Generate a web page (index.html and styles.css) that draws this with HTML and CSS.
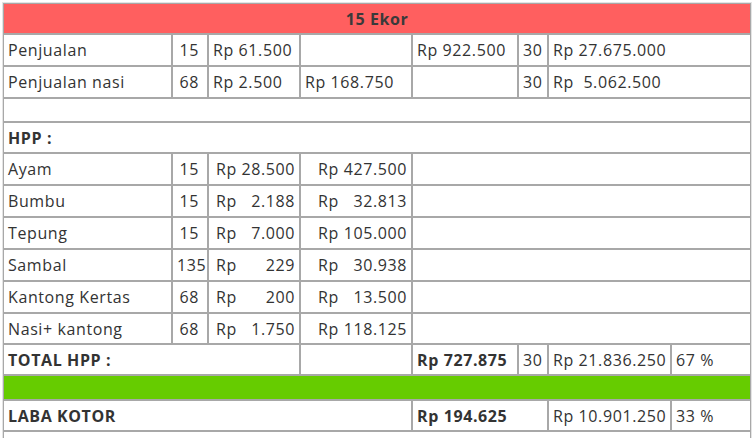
FILE: index.html
```html
<!DOCTYPE html>
<html>
<head>
<meta charset="utf-8">
<link rel="stylesheet" href="styles.css">
</head>
<body>
<table class="sheet">
  <colgroup>
    <col class="c1"><col class="c2"><col class="c3"><col class="c4"><col class="c5"><col class="c6"><col class="c7"><col class="c8">
  </colgroup>
  <tr class="head"><td colspan="8">15 Ekor</td></tr>
  <tr class="row">
    <td>Penjualan</td><td class="num">15</td><td>Rp 61.500</td><td></td><td>Rp 922.500</td><td class="num">30</td><td colspan="2">Rp 27.675.000</td>
  </tr>
  <tr class="row">
    <td>Penjualan nasi</td><td class="num">68</td><td>Rp 2.500</td><td>Rp 168.750</td><td></td><td class="num">30</td><td colspan="2">Rp&nbsp; 5.062.500</td>
  </tr>
  <tr class="blank"><td colspan="8"></td></tr>
  <tr class="row short"><td colspan="8" class="b">HPP :</td></tr>
  <tr class="row">
    <td>Ayam</td><td class="num">15</td>
    <td class="acc a3"><span>Rp</span><span>28.500</span></td>
    <td class="acc a4"><span>Rp</span><span>427.500</span></td>
    <td colspan="4"></td>
  </tr>
  <tr class="row">
    <td>Bumbu</td><td class="num">15</td>
    <td class="acc a3"><span>Rp</span><span>2.188</span></td>
    <td class="acc a4"><span>Rp</span><span>32.813</span></td>
    <td colspan="4"></td>
  </tr>
  <tr class="row">
    <td>Tepung</td><td class="num">15</td>
    <td class="acc a3"><span>Rp</span><span>7.000</span></td>
    <td class="acc a4"><span>Rp</span><span>105.000</span></td>
    <td colspan="4"></td>
  </tr>
  <tr class="row">
    <td>Sambal</td><td class="num">135</td>
    <td class="acc a3"><span>Rp</span><span>229</span></td>
    <td class="acc a4"><span>Rp</span><span>30.938</span></td>
    <td colspan="4"></td>
  </tr>
  <tr class="row">
    <td>Kantong Kertas</td><td class="num">68</td>
    <td class="acc a3"><span>Rp</span><span>200</span></td>
    <td class="acc a4"><span>Rp</span><span>13.500</span></td>
    <td colspan="4"></td>
  </tr>
  <tr class="row short">
    <td>Nasi+ kantong</td><td class="num">68</td>
    <td class="acc a3"><span>Rp</span><span>1.750</span></td>
    <td class="acc a4"><span>Rp</span><span>118.125</span></td>
    <td colspan="4"></td>
  </tr>
  <tr class="row short">
    <td colspan="3" class="b">TOTAL HPP :</td><td></td><td class="b">Rp 727.875</td><td class="num">30</td><td>Rp 21.836.250</td><td>67 %</td>
  </tr>
  <tr class="green"><td colspan="8"></td></tr>
  <tr class="row short">
    <td colspan="4" class="b">LABA KOTOR</td><td colspan="2" class="b">Rp 194.625</td><td>Rp 10.901.250</td><td>33 %</td>
  </tr>
  <tr class="row"><td colspan="8"></td></tr>
</table>
</body>
</html>
```
FILE: styles.css
```css
html, body {
  margin: 0;
  padding: 0;
  background: #ffffff;
}
body {
  padding: 2px;
  font-family: "Open Sans", "DejaVu Sans", sans-serif;
  font-size: 16px;
  letter-spacing: 0.6px;
  color: #333333;
}
.sheet {
  border-collapse: separate;
  border-spacing: 0;
  table-layout: fixed;
  width: 750px;
  border: 1px solid #e4e4e4;
}
.c1 { width: 169px; }
.c2 { width: 36px; }
.c3 { width: 92px; }
.c4 { width: 112px; }
.c5 { width: 106px; }
.c6 { width: 30px; }
.c7 { width: 123px; }
.c8 { width: 80px; }
.sheet td {
  border: 1px solid #a8a8a8;
  padding: 0 4px;
  white-space: nowrap;
  overflow: hidden;
  line-height: 20px;
}
.head td {
  background: #ff5f5f;
  height: 29px;
  text-align: center;
  font-weight: bold;
  color: #3a3a3a;
}
.row td {
  height: 30px;
}
.row.short td {
  height: 29px;
}
.blank td {
  height: 22px;
}
.green td {
  background: #66cc00;
  height: 23px;
}
.sheet td.num {
  text-align: right;
  padding-right: 8px;
}
.b {
  font-weight: bold;
}
.acc span:first-child {
  float: left;
}
.acc span:last-child {
  float: right;
}
.sheet td.a3 {
  padding-left: 7px;
  padding-right: 4px;
}
.sheet td.a4 {
  padding-left: 17px;
  padding-right: 4px;
}
```
